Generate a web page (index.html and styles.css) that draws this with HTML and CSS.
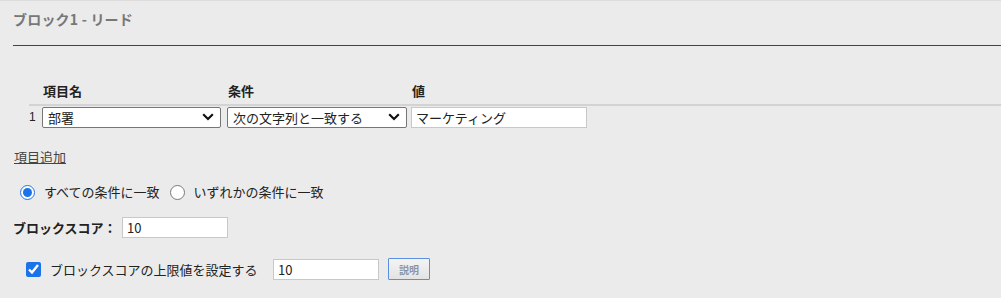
FILE: index.html
```html
<!DOCTYPE html><html lang="ja"><head><meta charset="UTF-8"><title>ブロック1 - リード</title>
<link rel="stylesheet" href="styles.css">
</head><body>

<div class="block">
  <h2 class="block-title">ブロック1 - リード</h2>

  <div class="conds">
    <div class="num"></div>
    <div class="th">項目名</div>
    <div class="th">条件</div>
    <div class="th">値</div>
    <div class="rule"></div>
    <div class="num">1</div>
    <div><select class="sel"><option>部署</option></select></div>
    <div><select class="sel wide"><option>次の文字列と一致する</option></select></div>
    <div><input class="txt val" type="text" value="マーケティング"></div>
  </div>

  <a class="add" href="#">項目追加</a>

  <div class="match">
    <label class="opt"><input type="radio" name="m" checked> すべての条件に一致</label>
    <label class="opt"><input type="radio" name="m"> いずれかの条件に一致</label>
  </div>

  <div class="score">
    <b>ブロックスコア：</b>
    <input class="txt num-in" type="text" value="10">
  </div>

  <div class="limit">
    <label class="chk"><input type="checkbox" checked> ブロックスコアの上限値を設定する</label>
    <input class="txt num-in" type="text" value="10">
    <button class="help">説明</button>
  </div>
</div>

</body></html>
```

FILE: styles.css
```css
*{box-sizing:border-box}
html,body{margin:0;height:100%}
body{background:#ebebeb;font-family:"Noto Sans CJK JP","Noto Sans",sans-serif;font-size:13px;color:#222;border-top:1px solid #dcdcdc}
.block{padding:8px 0 0 13px}
.block-title{margin:0;font-size:14px;font-weight:bold;color:#777;line-height:20px;padding-bottom:16px;border-bottom:1px solid #444;letter-spacing:.2px}
/* conditions table */
.conds{display:grid;grid-template-columns:13px 185px 184px 1fr;margin:35px 0 0 16px;align-items:center}
.th{font-weight:bold;line-height:19px;padding-left:1px;padding-bottom:4px}
.rule{grid-column:1/-1;height:2px;background:#d3d3d3}
.num{font-family:"Liberation Sans",sans-serif;font-size:12px;line-height:21px}
.sel{-webkit-appearance:none;appearance:none;width:179px;height:21px;font-family:inherit;font-size:13px;color:#222;border:1px solid #767676;border-radius:2px;padding:0 20px 0 5px;margin:0;
  background:#fff url("data:image/svg+xml;utf8,<svg xmlns='http://www.w3.org/2000/svg' width='12' height='8' viewBox='0 0 12 8'><path d='M1.2 1.3 6 6 10.8 1.3' fill='none' stroke='%23111' stroke-width='2.2'/></svg>") no-repeat right 6px center}
.sel.wide{width:180px}
.txt{height:21px;border:1px solid #c8c8c8;background:#fff;font-family:inherit;font-size:13px;color:#222;padding:0 4px;margin:0;outline:none}
.val{width:176px;margin-top:1px}
/* footer */
.add{display:inline-block;margin-top:20px;color:#444;text-decoration:underline;line-height:18px;margin-left:1px}
.match{display:flex;gap:8px;margin-top:16px;padding-left:5px;line-height:20px}
.opt{display:flex;align-items:center}
.opt input{width:15px;height:15px;margin:0 9px 0 2px;accent-color:#1a73e8}
.score{display:flex;align-items:center;margin-top:15px}
.score b{width:109px;line-height:21px}
.score .num-in{width:106px}
.limit{display:flex;align-items:center;margin-top:20px;padding-left:13px}
.chk{display:flex;align-items:center;width:247px}
.chk input{width:15px;height:15px;margin:0 9px 0 0;accent-color:#1a73e8}
.limit .num-in{width:106px}
.help{margin-left:9px;width:42px;height:22px;border:1px solid #5a8fe0;background:linear-gradient(#f4f4f4,#e3e3e3);color:#8a96a8;font-family:inherit;font-size:10px;font-weight:bold;padding:0;border-radius:1px}
```
